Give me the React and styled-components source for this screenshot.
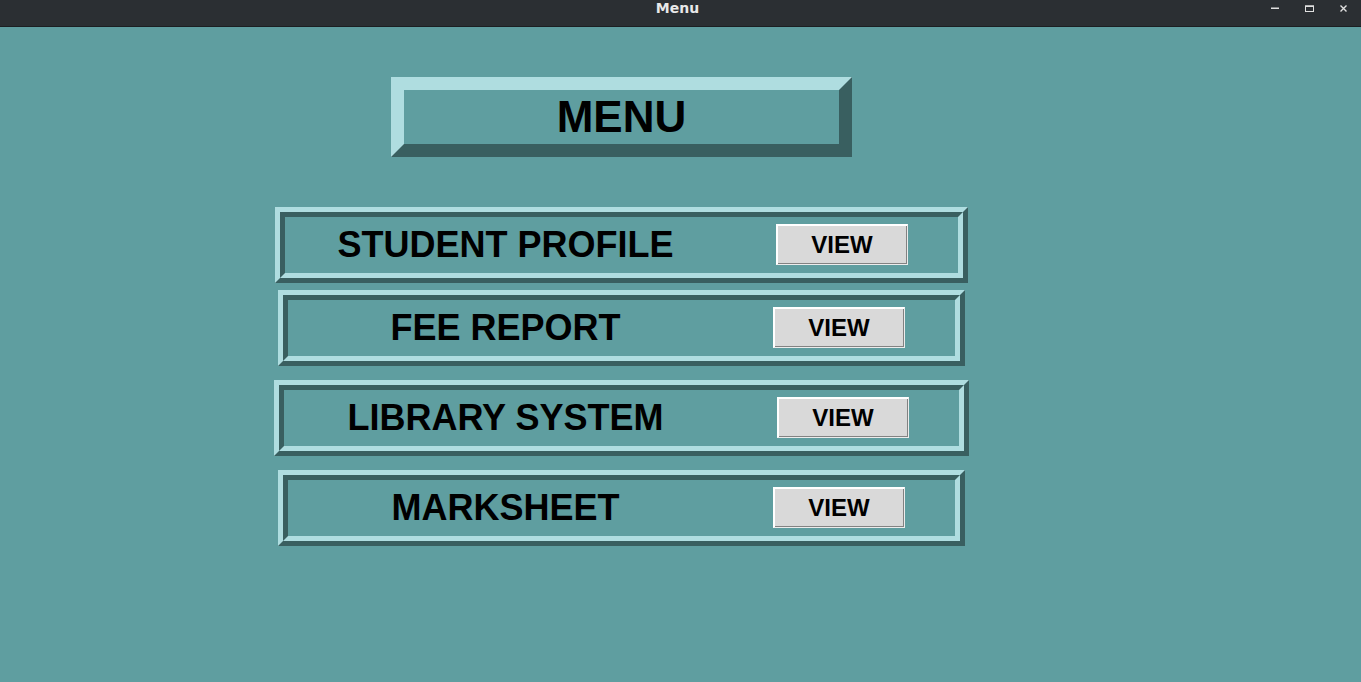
import React from "react";
import styled, { createGlobalStyle } from "styled-components";

const GlobalStyle = createGlobalStyle`
  html, body {
    margin: 0;
    padding: 0;
    background: #5f9ea0;
    overflow: hidden;
  }
  body {
    font-family: "Liberation Sans", Arial, sans-serif;
  }
`;

const Window = styled.div`
  width: 1361px;
  height: 682px;
  display: flex;
  flex-direction: column;
  background: #5f9ea0;
`;

const TitleBar = styled.header`
  flex: none;
  height: 27px;
  box-sizing: border-box;
  background: #2b2f33;
  border-bottom: 1px solid #1c1f22;
  display: grid;
  grid-template-columns: 1fr auto 1fr;
  align-items: start;
`;

const Title = styled.div`
  grid-column: 2;
  padding-right: 6px;
  font-family: "DejaVu Sans", "Noto Sans", sans-serif;
  font-weight: bold;
  font-size: 14px;
  line-height: 16px;
  color: #e8e8e8;
`;

const Controls = styled.div`
  grid-column: 3;
  justify-self: end;
  display: flex;
  padding-right: 1px;
`;

const Control = styled.div`
  width: 34px;
  height: 16px;
  display: flex;
  align-items: center;
  justify-content: center;
  color: #e0e0e0;
`;

const Main = styled.main`
  width: 1243px;
  display: flex;
  flex-direction: column;
  align-items: center;
  padding-top: 50px;
`;

const Header = styled.div`
  width: 461px;
  height: 80px;
  box-sizing: border-box;
  border: 13px solid;
  border-color: #afdde0 #395f60 #395f60 #afdde0;
  display: flex;
  align-items: center;
  justify-content: center;
  font-weight: bold;
  font-size: 44px;
  color: #000;
`;

const RowFrame = styled.section`
  width: ${(p) => p.$width}px;
  margin-top: ${(p) => p.$top}px;
  box-sizing: border-box;
  border: 5px solid;
  border-color: #afdde0 #395f60 #395f60 #afdde0;
`;

const RowBody = styled.div`
  height: 66px;
  box-sizing: border-box;
  border: 5px solid;
  border-color: #395f60 #afdde0 #afdde0 #395f60;
  display: flex;
  align-items: center;
`;

const RowLabel = styled.div`
  flex: 1;
  padding-right: 50px;
  text-align: center;
  font-weight: bold;
  font-size: 36px;
  color: #000;
  white-space: nowrap;
`;

const ViewButton = styled.button`
  flex: none;
  width: 132px;
  height: 41px;
  margin: 0 50px 1px 0;
  padding: 0;
  box-sizing: border-box;
  background: #d9d9d9;
  border: 1px solid;
  border-color: #ffffff #ececec #ececec #ffffff;
  box-shadow: inset 1px 1px 0 #ffffff, inset -1px -1px 0 #828282;
  font-family: "Liberation Sans", Arial, sans-serif;
  font-weight: bold;
  font-size: 24px;
  color: #000;
  cursor: pointer;
`;

const rows = [
  { label: "STUDENT PROFILE", width: 693, top: 50 },
  { label: "FEE REPORT", width: 687, top: 7 },
  { label: "LIBRARY SYSTEM", width: 695, top: 14 },
  { label: "MARKSHEET", width: 687, top: 14 },
];

export default function App() {
  return (
    <Window>
      <GlobalStyle />
      <TitleBar>
        <Title>Menu</Title>
        <Controls>
          <Control>
            <svg width="8" height="8" viewBox="0 0 8 8">
              <rect x="0" y="3.5" width="8" height="1.5" fill="currentColor" />
            </svg>
          </Control>
          <Control>
            <svg width="9" height="7" viewBox="0 0 9 7">
              <rect x="0.5" y="1" width="8" height="5.5" fill="none" stroke="currentColor" strokeWidth="1" />
              <rect x="0" y="0.5" width="9" height="1.5" fill="currentColor" />
            </svg>
          </Control>
          <Control>
            <svg width="7" height="7" viewBox="0 0 7 7">
              <path d="M0.5 0.5 L6.5 6.5 M6.5 0.5 L0.5 6.5" stroke="currentColor" strokeWidth="1.4" />
            </svg>
          </Control>
        </Controls>
      </TitleBar>
      <Main>
        <Header>MENU</Header>
        {rows.map((r) => (
          <RowFrame key={r.label} $width={r.width} $top={r.top}>
            <RowBody>
              <RowLabel>{r.label}</RowLabel>
              <ViewButton>VIEW</ViewButton>
            </RowBody>
          </RowFrame>
        ))}
      </Main>
    </Window>
  );
}
